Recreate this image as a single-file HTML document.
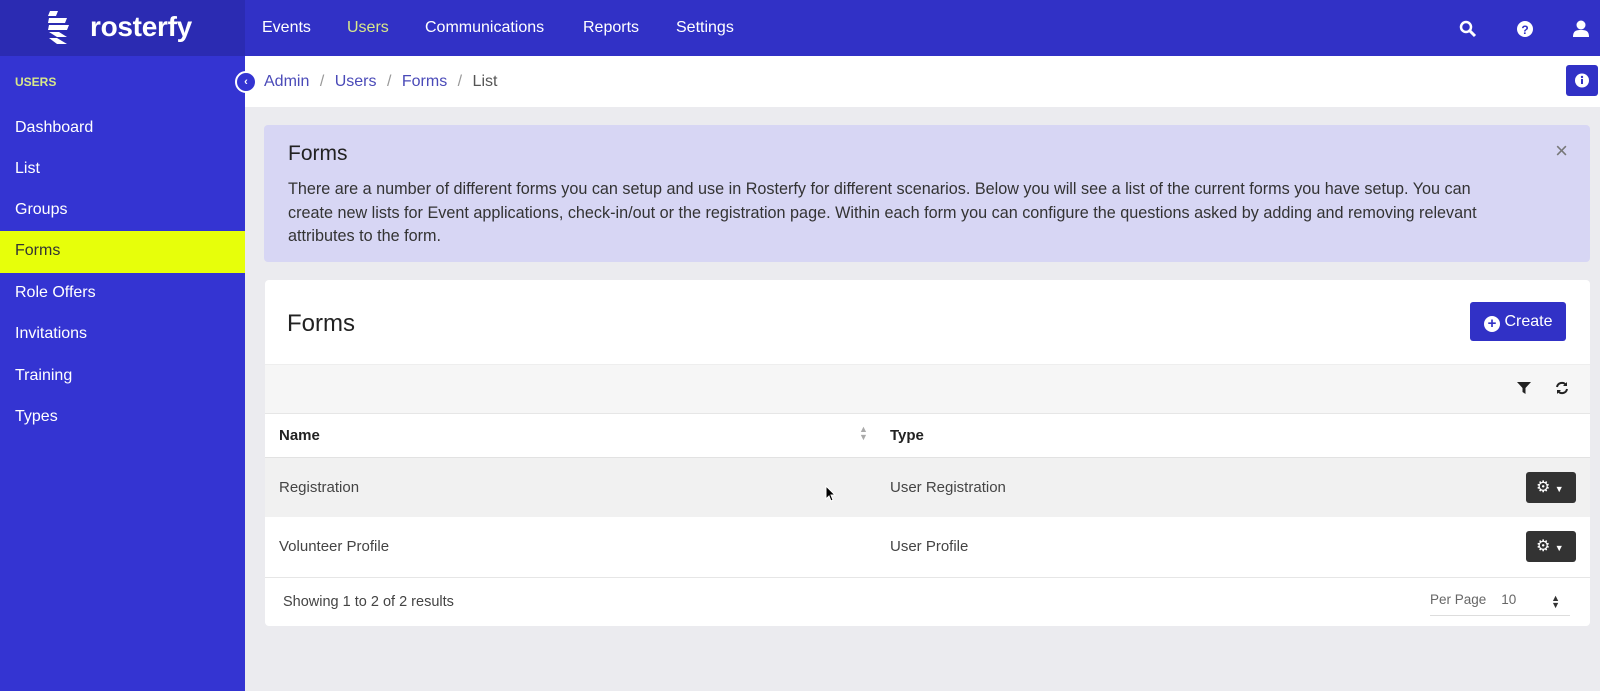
<!DOCTYPE html>
<html><head><meta charset="utf-8"><style>
*{box-sizing:border-box;margin:0;padding:0}
body{width:1600px;height:691px;overflow:hidden;font-family:"Liberation Sans",sans-serif;background:#ebebef;position:relative}
.top{position:absolute;left:0;top:0;width:1600px;height:56px;background:#3131c6}
.logo{position:absolute;left:0;top:0;width:245px;height:56px;background:#2b2bb2}
.nav{position:absolute;top:19px;color:#fff;font-size:16px}
.side{position:absolute;left:0;top:56px;width:245px;height:635px;background:#3434d2}
.side div{position:absolute;left:15px;color:#fff;font-size:16px}
.bc{position:absolute;left:245px;top:56px;width:1355px;height:51px;background:#fff}
.alert{position:absolute;left:264px;top:125px;width:1326px;height:137px;background:#d7d6f4;border-radius:4px}
.card{position:absolute;left:265px;top:280px;width:1325px;height:346px;background:#fff;border-radius:4px;overflow:hidden}
.a{position:absolute}
</style></head><body>
<div class="top"></div>
<div class="logo"></div>
<svg class="a" style="left:48px;top:11px" width="22" height="34" viewBox="0 0 22 34"><g fill="#fff"><path d="M2 0h8l-2 5H0z"/><path d="M1 7h18l-2 5H0z"/><path d="M1 14h20l-2 5H0z"/><path d="M1 21h10l8 5H9z"/><path d="M1 27h8l10 6H9z"/></g></svg>
<div class="a" style="left:90px;top:11px;color:#fff;font-size:28px;font-weight:bold;letter-spacing:-0.3px">rosterfy</div>
<div class="nav" style="left:262px">Events</div>
<div class="nav" style="left:347px;color:#d8e88a">Users</div>
<div class="nav" style="left:425px">Communications</div>
<div class="nav" style="left:583px">Reports</div>
<div class="nav" style="left:676px">Settings</div>
<svg class="a" style="left:1459px;top:20px" width="18" height="18" viewBox="0 0 18 18"><circle cx="7" cy="7" r="5" fill="none" stroke="#fff" stroke-width="2.5"/><path d="M11 11l5 5" stroke="#fff" stroke-width="3"/></svg>
<svg class="a" style="left:1516px;top:20px" width="18" height="18"><circle cx="9" cy="9" r="8" fill="#fff"/><text x="9" y="14" font-size="12" font-weight="bold" text-anchor="middle" fill="#3131c6" font-family="Liberation Sans">?</text></svg>
<svg class="a" style="left:1572px;top:19px" width="18" height="20"><circle cx="9" cy="6" r="4.5" fill="#fff"/><path d="M1 18c0-6 3-7 8-7s8 1 8 7z" fill="#fff"/></svg>
<div class="side">
<div style="left:0;top:175px;width:245px;height:42px;background:#e7ff0a"></div>
<div style="top:19px;font-size:12px;font-weight:bold;color:#d8e88a">USERS</div>
<div style="top:63px">Dashboard</div>
<div style="top:104px">List</div>
<div style="top:145px">Groups</div>
<div style="top:186px;color:#333">Forms</div>
<div style="top:228px">Role Offers</div>
<div style="top:269px">Invitations</div>
<div style="top:311px">Training</div>
<div style="top:352px">Types</div>
</div>
<div class="bc"></div>
<div class="a" style="left:235px;top:71px;width:22px;height:22px;border-radius:50%;background:#3434d2;border:2px solid #fff;color:#fff;font-size:11px;text-align:center;line-height:18px;font-weight:bold">‹</div>
<div class="a" style="left:264px;top:73px;font-size:16px"><span style="color:#4a4ab8">Admin</span> <span style="color:#999;margin:0 6px">/</span> <span style="color:#4a4ab8">Users</span> <span style="color:#999;margin:0 6px">/</span> <span style="color:#4a4ab8">Forms</span> <span style="color:#999;margin:0 6px">/</span> <span style="color:#555">List</span></div>
<div class="a" style="left:1566px;top:65px;width:32px;height:31px;background:#3131c6;border-radius:3px"><svg width="32" height="31"><circle cx="16" cy="15.5" r="7" fill="#fff"/><rect x="15" y="14" width="2" height="5" fill="#3131c6"/><circle cx="16" cy="12" r="1.2" fill="#3131c6"/></svg></div>
<div class="alert">
<div class="a" style="left:24px;top:17px;font-size:21px;color:#222">Forms</div>
<div class="a" style="right:22px;top:13px;font-size:22px;color:#777">×</div>
<div class="a" style="left:24px;top:53px;width:1205px;font-size:16.2px;line-height:23.5px;color:#333">There are a number of different forms you can setup and use in Rosterfy for different scenarios. Below you will see a list of the current forms you have setup. You can create new lists for Event applications, check-in/out or the registration page. Within each form you can configure the questions asked by adding and removing relevant attributes to the form.</div>
</div>
<div class="card">
<div class="a" style="left:22px;top:30px;font-size:24px;color:#222">Forms</div>
<div class="a" style="left:1205px;top:22px;width:96px;height:39px;background:#3131c6;border-radius:3px;color:#fff;font-size:16px;line-height:39px;padding-left:14px"><span style="display:inline-block;width:16px;height:16px;border-radius:50%;background:#fff;color:#3131c6;font-size:15px;line-height:15px;text-align:center;font-weight:bold;vertical-align:-2px">+</span> Create</div>
<div class="a" style="left:0;top:84px;width:1325px;height:50px;background:#f6f6f6;border-top:1px solid #eee;border-bottom:1px solid #e6e6e6"></div>
<svg class="a" style="left:1252px;top:101px" width="14" height="14"><path d="M0 1h14L8.5 7v6l-3-2V7z" fill="#222"/></svg>
<svg class="a" style="left:1290px;top:101px" width="14" height="14" viewBox="0 0 14 14"><path d="M2 6a5 5 0 0 1 9-2M12 8a5 5 0 0 1-9 2" fill="none" stroke="#222" stroke-width="2"/><path d="M12 1v4H8zM2 13V9h4z" fill="#222"/></svg>
<div class="a" style="left:14px;top:147px;font-size:15px;font-weight:bold;color:#222">Name</div>
<div class="a" style="left:594px;top:145px;font-size:9px;color:#aaa;line-height:8px">▲<br>▼</div>
<div class="a" style="left:625px;top:147px;font-size:15px;font-weight:bold;color:#222">Type</div>
<div class="a" style="left:0;top:177px;width:1325px;height:60px;background:#f1f1f1;border-top:1px solid #e2e2e2"></div>
<div class="a" style="left:14px;top:199px;font-size:15px;color:#444">Registration</div>
<div class="a" style="left:625px;top:199px;font-size:15px;color:#444">User Registration</div>
<div class="a" style="left:14px;top:258px;font-size:15px;color:#444">Volunteer Profile</div>
<div class="a" style="left:625px;top:258px;font-size:15px;color:#444">User Profile</div>
<div class="a" style="left:0;top:297px;width:1325px;height:1px;background:#e6e6e6"></div>
<div class="a" style="left:1261px;top:192px;width:50px;height:31px;background:#333;border-radius:3px;color:#fff;font-size:16px;line-height:31px;padding-left:10px">⚙ <span style="font-size:9px">▼</span></div>
<div class="a" style="left:1261px;top:251px;width:50px;height:31px;background:#333;border-radius:3px;color:#fff;font-size:16px;line-height:31px;padding-left:10px">⚙ <span style="font-size:9px">▼</span></div>
<div class="a" style="left:18px;top:314px;font-size:14.5px;color:#444">Showing 1 to 2 of 2 results</div>
<div class="a" style="left:1165px;top:312px;font-size:13.5px;color:#666;width:140px;height:24px;border-bottom:1px solid #ddd">Per Page &nbsp;&nbsp; 10 <span style="position:absolute;right:10px;font-size:9px;line-height:7px;top:3px;color:#333">▲<br>▼</span></div>
</div>
<svg class="a" style="left:825px;top:485px" width="12" height="18"><path d="M1 1v13l3-3 2 5 2-1-2-5h4z" fill="#000" stroke="#fff" stroke-width="1"/></svg>
</body></html>
